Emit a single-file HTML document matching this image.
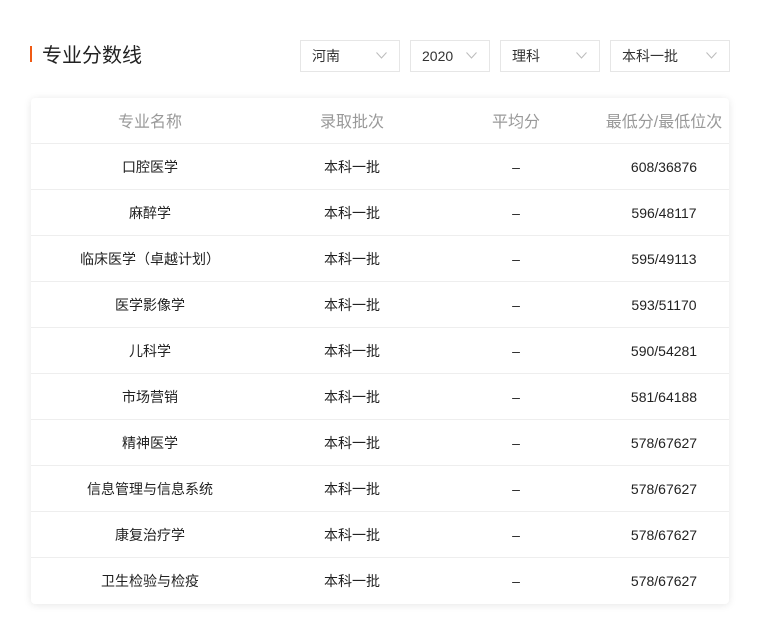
<!DOCTYPE html>
<html><head><meta charset="utf-8"><style>
*{margin:0;padding:0;box-sizing:border-box}
body{width:761px;height:624px;background:#fff;font-family:"Liberation Sans","Noto Sans CJK SC",sans-serif;position:relative;overflow:hidden}
.bar{position:absolute;left:30px;top:46px;width:2px;height:16px;background:#f05a14}
.title{position:absolute;left:42px;top:43px;font-size:20px;color:#222;line-height:26px}
.dd{position:absolute;top:40px;height:32px;border:1px solid #e6e6e6;font-size:14px;color:#333;line-height:30px;padding-left:11px}
.dd svg{position:absolute;right:12px;top:11px}
.tbl{position:absolute;left:31px;top:98px;width:698px;height:506px;border-radius:4px;box-shadow:0 1px 8px rgba(0,0,0,.1);background:#fff;overflow:hidden}
.row{height:46px;border-bottom:1px solid #eee;position:relative;font-size:14px;color:#222}
.row:last-child{border-bottom:none}
.row span{position:absolute;top:0;line-height:46px;transform:translateX(-50%);white-space:nowrap}
.hd{color:#999;font-size:16px}
.hd span{top:2px}
</style></head><body>
<div class="bar"></div><div class="title">专业分数线</div>
<div class="dd" style="left:300px;width:100px">河南<svg width="11" height="7" viewBox="0 0 11 7"><path d="M0.5 0.5L5.5 6L10.5 0.5" fill="none" stroke="#bbb"/></svg></div>
<div class="dd" style="left:410px;width:80px">2020<svg width="11" height="7" viewBox="0 0 11 7"><path d="M0.5 0.5L5.5 6L10.5 0.5" fill="none" stroke="#bbb"/></svg></div>
<div class="dd" style="left:500px;width:100px">理科<svg width="11" height="7" viewBox="0 0 11 7"><path d="M0.5 0.5L5.5 6L10.5 0.5" fill="none" stroke="#bbb"/></svg></div>
<div class="dd" style="left:610px;width:120px">本科一批<svg width="11" height="7" viewBox="0 0 11 7"><path d="M0.5 0.5L5.5 6L10.5 0.5" fill="none" stroke="#bbb"/></svg></div>
<div class="tbl">
<div class="row hd"><span style="left:119px">专业名称</span><span style="left:321px">录取批次</span><span style="left:485px">平均分</span><span style="left:633px">最低分/最低位次</span></div>
<div class="row"><span style="left:119px">口腔医学</span><span style="left:321px">本科一批</span><span style="left:485px">–</span><span style="left:633px">608/36876</span></div>
<div class="row"><span style="left:119px">麻醉学</span><span style="left:321px">本科一批</span><span style="left:485px">–</span><span style="left:633px">596/48117</span></div>
<div class="row"><span style="left:119px">临床医学（卓越计划）</span><span style="left:321px">本科一批</span><span style="left:485px">–</span><span style="left:633px">595/49113</span></div>
<div class="row"><span style="left:119px">医学影像学</span><span style="left:321px">本科一批</span><span style="left:485px">–</span><span style="left:633px">593/51170</span></div>
<div class="row"><span style="left:119px">儿科学</span><span style="left:321px">本科一批</span><span style="left:485px">–</span><span style="left:633px">590/54281</span></div>
<div class="row"><span style="left:119px">市场营销</span><span style="left:321px">本科一批</span><span style="left:485px">–</span><span style="left:633px">581/64188</span></div>
<div class="row"><span style="left:119px">精神医学</span><span style="left:321px">本科一批</span><span style="left:485px">–</span><span style="left:633px">578/67627</span></div>
<div class="row"><span style="left:119px">信息管理与信息系统</span><span style="left:321px">本科一批</span><span style="left:485px">–</span><span style="left:633px">578/67627</span></div>
<div class="row"><span style="left:119px">康复治疗学</span><span style="left:321px">本科一批</span><span style="left:485px">–</span><span style="left:633px">578/67627</span></div>
<div class="row"><span style="left:119px">卫生检验与检疫</span><span style="left:321px">本科一批</span><span style="left:485px">–</span><span style="left:633px">578/67627</span></div>
</div>
</body></html>
